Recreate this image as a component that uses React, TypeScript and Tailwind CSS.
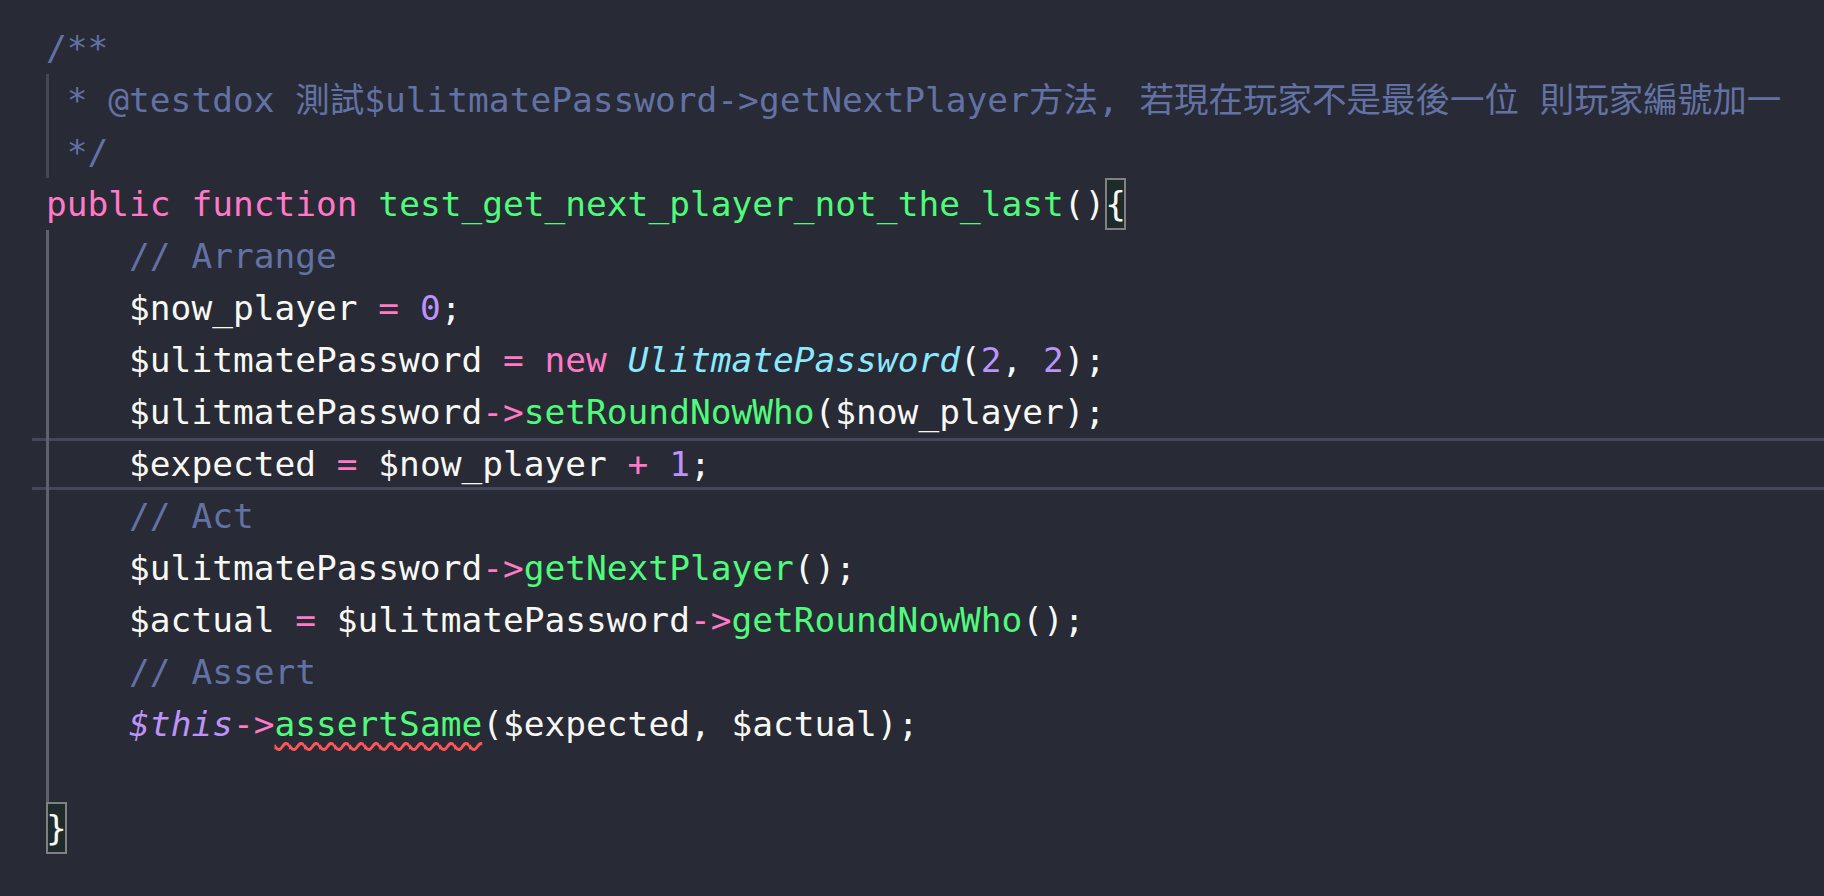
type Tok = { t: string; c?: string; brace?: boolean };

const cm = 'text-[#6272a4]';
const pk = 'text-[#ff79c6]';
const gr = 'text-[#50fa7b]';
const pu = 'text-[#bd93f9]';
const cy = 'text-[#8be9fd] italic';
const th = 'text-[#bd93f9] italic';
const squiggle =
    'text-[#50fa7b] underline decoration-wavy decoration-[#ff5555] decoration-[3px] underline-offset-[6px]';

const lines: Tok[][] = [
    [{ t: '/**', c: cm }],
    [{ t: ' * @testdox 測試$ulitmatePassword->getNextPlayer方法, 若現在玩家不是最後一位 則玩家編號加一', c: cm }],
    [{ t: ' */', c: cm }],
    [
        { t: 'public', c: pk },
        { t: ' ' },
        { t: 'function', c: pk },
        { t: ' ' },
        { t: 'test_get_next_player_not_the_last', c: gr },
        { t: '()' },
        { t: '{', brace: true },
    ],
    [{ t: '    ' }, { t: '// Arrange', c: cm }],
    [{ t: '    $now_player ' }, { t: '=', c: pk }, { t: ' ' }, { t: '0', c: pu }, { t: ';' }],
    [
        { t: '    $ulitmatePassword ' },
        { t: '=', c: pk },
        { t: ' ' },
        { t: 'new', c: pk },
        { t: ' ' },
        { t: 'UlitmatePassword', c: cy },
        { t: '(' },
        { t: '2', c: pu },
        { t: ', ' },
        { t: '2', c: pu },
        { t: ');' },
    ],
    [{ t: '    $ulitmatePassword' }, { t: '->', c: pk }, { t: 'setRoundNowWho', c: gr }, { t: '($now_player);' }],
    [
        { t: '    $expected ' },
        { t: '=', c: pk },
        { t: ' $now_player ' },
        { t: '+', c: pk },
        { t: ' ' },
        { t: '1', c: pu },
        { t: ';' },
    ],
    [{ t: '    ' }, { t: '// Act', c: cm }],
    [{ t: '    $ulitmatePassword' }, { t: '->', c: pk }, { t: 'getNextPlayer', c: gr }, { t: '();' }],
    [
        { t: '    $actual ' },
        { t: '=', c: pk },
        { t: ' $ulitmatePassword' },
        { t: '->', c: pk },
        { t: 'getRoundNowWho', c: gr },
        { t: '();' },
    ],
    [{ t: '    ' }, { t: '// Assert', c: cm }],
    [
        { t: '    ' },
        { t: '$this', c: th },
        { t: '->', c: pk },
        { t: 'assertSame', c: squiggle },
        { t: '($expected, $actual);' },
    ],
    [],
    [{ t: '}', brace: true }],
];

// line index that carries the cursor
const CURRENT = 8;

const Line = ({ toks }: { toks: Tok[] }) => (
    <>
        {toks.map((tok, i) =>
            tok.brace ? (
                <span
                    key={i}
                    className="inline-block h-[52px] align-top bg-[#1f2b2b] shadow-[inset_0_0_0_2px_#808183]"
                >
                    {tok.t}
                </span>
            ) : (
                <span key={i} className={tok.c}>
                    {tok.t}
                </span>
            )
        )}
    </>
);

export default function App() {
    return (
        <div className="h-[896px] w-full overflow-hidden bg-[#282a36] pt-[22px] font-['DejaVu_Sans_Mono','Noto_Sans_CJK_TC',monospace] text-[34.5px] leading-[52px] text-[#f8f8f2]">
            <div className="relative">
                {lines.map((toks, i) =>
                    i === CURRENT ? (
                        <div
                            key={i}
                            className="ml-[32px] box-border h-[52px] whitespace-pre border-y-[3px] border-[#44475a] pl-[14px] leading-[46px]"
                        >
                            <Line toks={toks} />
                        </div>
                    ) : (
                        <div key={i} className="h-[52px] whitespace-pre pl-[46px]">
                            <Line toks={toks} />
                        </div>
                    )
                )}

                {/* indent guides */}
                <div className="absolute left-[46px] top-[52px] h-[104px] w-[3px] bg-[#454754]" />
                <div className="absolute left-[46px] top-[208px] h-[572px] w-[3px] bg-[#5f616c]" />
            </div>
        </div>
    );
}
